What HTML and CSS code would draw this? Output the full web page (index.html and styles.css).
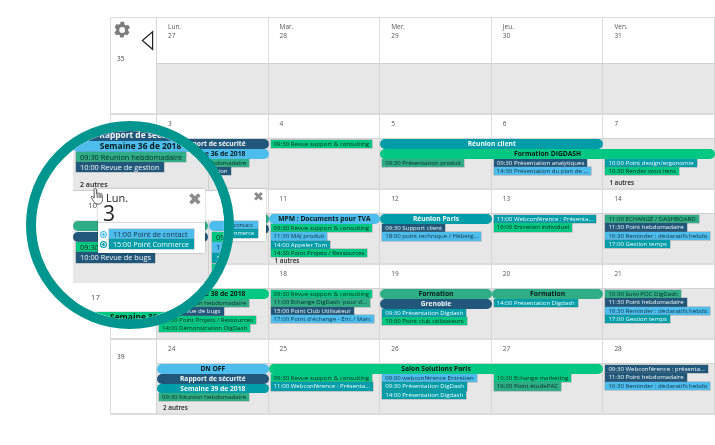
FILE: index.html
```html
<!DOCTYPE html>
<html lang="fr">
<head>
<meta charset="utf-8">
<title>Calendrier</title>
<link rel="stylesheet" href="styles.css">
</head>
<body>
<main class="calendar">
  <section class="week first">
    <div class="wk">
      <div class="wk-tools">
        <svg class="gear" viewBox="0 0 24 24"><path d="M19.4 13a7.5 7.5 0 0 0 0-2l2.2-1.7-2.2-3.7-2.6 1a7.5 7.5 0 0 0-1.700-1L14.500 2h-4.300l-.4 2.700a7.500 7.500 0 0 0-1.700 1l-2.600-1-2.200 3.700L5 11a7.500 7.500 0 0 0 0 2l-2.200 1.700 2.200 3.700 2.600-1a7.500 7.500 0 0 0 1.700 1l.4 2.600h4.300l.4-2.600a7.500 7.500 0 0 0 1.700-1l2.600 1 2.200-3.700zM12.200 15.500a3.500 3.500 0 1 1 0-7 3.500 3.500 0 0 1 0 7z"/></svg>
        <svg class="collapse" viewBox="0 0 14 22"><path d="M12.500 1.500 1.500 11l11 9.500z"/></svg>
      </div>
      <span class="wk-num">35</span>
    </div>
    <div class="head"><span>Lun.</span><span>27</span></div>
    <div class="head"><span>Mar.</span><span>28</span></div>
    <div class="head"><span>Mer.</span><span>29</span></div>
    <div class="head"><span>Jeu.</span><span>30</span></div>
    <div class="head"><span>Ven.</span><span>31</span></div>
    <div class="body">
      <div class="cell c1"></div><div class="cell c2"></div><div class="cell c3"></div><div class="cell c4"></div><div class="cell c5"></div>
    </div>
  </section>

  <section class="week">
    <div class="wk"></div>
    <div class="head"><span>3</span></div>
    <div class="head"><span>4</span></div>
    <div class="head"><span>5</span></div>
    <div class="head"><span>6</span></div>
    <div class="head"><span>7</span></div>
    <div class="body">
      <div class="cell c1 p2">
        <div class="ev sage">09:30 Réunion hebdomadaire</div>
        <div class="ev navy">10:00 Revue de gestion</div>
      </div>
      <div class="cell c2 p0"><div class="ev green">09:30 Revue support &amp; consulting</div></div>
      <div class="cell c3 p2"><div class="ev sage">09:30 Présentation produit</div></div>
      <div class="cell c4 p2">
        <div class="ev navy">09:30 Présentation analytiques</div>
        <div class="ev sky">14:30 Présentation du plan de ...</div>
      </div>
      <div class="cell c5 p2">
        <div class="ev teal">10:00 Point design/ergonomie</div>
        <div class="ev green">10:30 Rendez vous liens</div>
        <div class="more">1 autres</div>
      </div>
      <div class="bar navy c1 r1">Rapport de sécurité</div>
      <div class="bar sky c1 r2">Semaine 36 de 2018</div>
      <div class="bar teal c3 s2 r1">Réunion client</div>
      <div class="bar green c3 s3 r2">Formation DIGDASH</div>
    </div>
  </section>

  <section class="week">
    <div class="wk"></div>
    <div class="head"><span></span></div>
    <div class="head"><span>11</span></div>
    <div class="head"><span>12</span></div>
    <div class="head"><span>13</span></div>
    <div class="head"><span>14</span></div>
    <div class="body">
      <div class="cell c1 p2"></div>
      <div class="cell c2 p1">
        <div class="ev green">09:30 Revue support &amp; consulting</div>
        <div class="ev sky">11:30 MAJ produit</div>
        <div class="ev teal">14:00 Appeler Tom</div>
        <div class="ev green">14:30 Point Projets / Ressources</div>
        <div class="more">1 autres</div>
      </div>
      <div class="cell c3 p1">
        <div class="ev navy">09:30 Support client</div>
        <div class="ev sky">18:00 point technique / Héberg...</div>
      </div>
      <div class="cell c4 p0">
        <div class="ev teal">11:00 Webconférence : Présenta...</div>
        <div class="ev green">16:00 Entretien individuel</div>
      </div>
      <div class="cell c5 p0">
        <div class="ev sage">11:00 ECHANGE / DASHBOARD</div>
        <div class="ev navy">11:30 Point hebdomadaire</div>
        <div class="ev sky">16:30 Reminder : déclaratifs hebdo</div>
        <div class="ev teal">17:00 Gestion temps</div>
      </div>
      <div class="bar sage c1 r1"></div>
      <div class="bar navy c1 r2"></div>
      <div class="bar sky c2 r1">MPM : Documents pour TVA</div>
      <div class="bar teal c3 r1">Réunion Paris</div>
    </div>
  </section>

  <section class="week">
    <div class="wk"></div>
    <div class="head"><span></span></div>
    <div class="head"><span>18</span></div>
    <div class="head"><span>19</span></div>
    <div class="head"><span>20</span></div>
    <div class="head"><span>21</span></div>
    <div class="body">
      <div class="cell c1 p1">
        <div class="ev sage">09:30 Réunion hebdomadaire</div>
        <div class="ev navy">10:00 Revue de bugs</div>
        <div class="ev green">11:30 Point Projets / Ressources</div>
        <div class="ev green">14:00 Démonstration DigDash</div>
      </div>
      <div class="cell c2 p0">
        <div class="ev green">09:30 Revue support &amp; consulting</div>
        <div class="ev sage">11:00 Echange DigDash&nbsp; pour d...</div>
        <div class="ev navy">15:00 Point Club Utilisateur</div>
        <div class="ev sky">17:00 Point d'échange - Eric / Marc</div>
      </div>
      <div class="cell c3 p2">
        <div class="ev teal">09:30 Présentation Digdash</div>
        <div class="ev green">10:00 Point club utilisateurs</div>
      </div>
      <div class="cell c4 p1"><div class="ev teal">14:00 Présentation Digdash</div></div>
      <div class="cell c5 p0">
        <div class="ev sage">10:30 Suivi POC DigDash</div>
        <div class="ev navy">11:30 Point hebdomadaire</div>
        <div class="ev sky">16:30 Reminder : déclaratifs hebdo</div>
        <div class="ev teal">17:00 Gestion temps</div>
      </div>
      <div class="bar green c1 r1">Semaine 38 de 2018</div>
      <div class="bar sage c3 r1">Formation</div>
      <div class="bar navy c3 r2">Grenoble</div>
      <div class="bar sage c4 r1">Formation</div>
    </div>
  </section>

  <section class="week">
    <div class="wk"><span class="wk-num">39</span></div>
    <div class="head"><span>24</span></div>
    <div class="head"><span>25</span></div>
    <div class="head"><span>26</span></div>
    <div class="head"><span>27</span></div>
    <div class="head"><span>28</span></div>
    <div class="body">
      <div class="cell c1 p3">
        <div class="ev sage">09:30 Réunion hebdomadaire</div>
        <div class="more">2 autres</div>
      </div>
      <div class="cell c2 p1">
        <div class="ev green">09:30 Revue support &amp; consulting</div>
        <div class="ev teal">11:00 Webconférence : Présenta...</div>
      </div>
      <div class="cell c3 p1">
        <div class="ev sky">09:00 webconférence Entretien</div>
        <div class="ev teal">09:30 Présentation DigDash</div>
        <div class="ev teal">14:00 Présentation Digdash</div>
      </div>
      <div class="cell c4 p1">
        <div class="ev green">10:30 Echange marketing</div>
        <div class="ev sage">16:30 Point étudePAC</div>
      </div>
      <div class="cell c5 p0">
        <div class="ev navy">09:30 Webconférence : présenta...</div>
        <div class="ev navy">11:30 Point hebdomadaire</div>
        <div class="ev sky">16:30 Reminder : déclaratifs hebdo</div>
      </div>
      <div class="bar sky c1 r1">DN OFF</div>
      <div class="bar navy c1 r2">Rapport de sécurité</div>
      <div class="bar teal c1 r3">Semaine 39 de 2018</div>
      <div class="bar green c2 s3 r1">Salon Solutions Paris</div>
    </div>
  </section>

  <aside class="popup back">
    <button class="close">✖</button>
    <div class="ev sky">11:00 Point de contact</div>
    <div class="ev teal">15:00 Point Commerce</div>
  </aside>

  <div class="lens">
    <div class="lens-grid">
      <div class="l-grey la">
        <div class="l-bar navy top">Rapport de sécurité</div>
        <div class="l-bar sky">Semaine 36 de 2018</div>
        <div class="l-ev sage">09:30 Réunion hebdomadaire</div>
        <div class="l-ev navy">10:00 Revue de gestion</div>
        <div class="l-more">2 autres</div>
      </div>
      <div class="l-grey lb"></div>
      <div class="l-white lc"><span>10</span></div>
      <div class="l-grey ld">
        <div class="l-bar sage">Réunion</div>
        <div class="l-bar navy"></div>
        <div class="l-ev green">09:30</div>
        <div class="l-ev navy">10:00 Revue de bugs</div>
      </div>
      <div class="l-grey le">
        <div class="l-bar sky edge"></div>
        <div class="l-ev green edge-ev">09</div>
        <div class="l-ev sky edge-ev">11</div>
        <div class="l-ev teal edge-ev">14</div>
        <div class="l-ev green edge-ev">14</div>
      </div>
      <div class="l-white lf"><span>17</span></div>
      <div class="l-grey lg"><div class="l-bar green">Semaine 38 de 2018</div></div>
    </div>
    <div class="popup front">
      <button class="close big">✖</button>
      <div class="pop-head"><span class="pop-day">Lun.</span><span class="pop-num">3</span></div>
      <div class="pop-list">
        <div class="pop-row"><i class="dot sky-dot"></i><div class="l-ev sky">11:00 Point de contact</div></div>
        <div class="pop-row"><i class="dot teal-dot"></i><div class="l-ev teal">15:00 Point Commerce</div></div>
      </div>
    </div>
    <svg class="hand" viewBox="0 0 14 19"><path d="M4.500 1.500c.8-.6 1.700 0 1.800 1l.3 4.300.6-.6c.7-.4 1.300-.3 1.700.3.600-.5 1.400-.3 1.700.4.700-.4 1.500 0 1.600.9l.3 4.700c0 2.500-1.200 4.500-3.800 4.600-2.500.1-4-.9-5-2.800L1.300 10.600c-.4-.9.500-1.700 1.400-1.100L4.300 11 4 2.500c0-.4.200-.8.500-1z"/><path d="M7 6.500 7.300 11M9 7l.2 4M10.700 7.500l.2 3.500"/></svg>
  </div>
</main>
</body>
</html>
```
FILE: styles.css
```css
* { box-sizing: border-box; }
html, body { margin: 0; background: #fff; }
body { width: 715px; height: 445px; overflow: hidden; font-family: "Open Sans", "Noto Sans", sans-serif; color: #333; }

.calendar { position: relative; width: 605px; margin: 17px 0 0 110px; border-top: 1px solid #dcdcdc; border-left: 1px solid #dcdcdc; filter: blur(.3px); }

.week { display: grid; grid-template-columns: 46px repeat(5, 1fr); grid-template-rows: 23px 52px; }
.week.first { grid-template-rows: 45px 52px; }

.wk { grid-row: 1 / 3; border-right: 1px solid #d4d4d4; border-bottom: 2px solid #dcdcdc; background: #fff; font-size: 6.500px; padding: 12px 0 0 6px; }
.first .wk { padding: 1px 0 0 1px; }
.wk-tools { display: flex; height: 34px; }
.gear { width: 20px; height: 20px; margin-top: 1px; fill: #7d7d7d; }
.collapse { width: 13px; height: 21px; margin: 11px 0 0 9px; fill: #fff; stroke: #222; stroke-width: 1.300; }
.first .wk-num { margin-left: 5px; display: block; margin-top: 1px; }
.wk-num { color: #444; }

.head { display: flex; flex-direction: column; padding: 5px 0 0 11px; font-size: 6.500px; line-height: 8.500px; color: #555; background: #fff; border-right: 1px solid #dcdcdc; }

.body { grid-column: 2 / 7; display: grid; grid-template-columns: repeat(5, 1fr); grid-template-rows: 10px 9.500px 9.500px 1fr; border-top: 1px solid #d2d2d2; height: 52px; }
.week .body { border-bottom: 2px solid #dcdcdc; }

.cell { grid-row: 1 / -1; min-width: 0; background: #e7e7e7; border-right: 1px solid #d4d4d4; display: flex; flex-direction: column; align-items: flex-start; padding-left: 2px; padding-bottom: 1px; }
.c1 { grid-column-start: 1; }
.c2 { grid-column-start: 2; }
.c3 { grid-column-start: 3; }
.c4 { grid-column-start: 4; }
.c5 { grid-column-start: 5; }
.s2 { grid-column-end: span 2; }
.s3 { grid-column-end: span 3; }
.p0 { padding-top: 1px; }
.p1 { padding-top: 10px; }
.p2 { padding-top: 19.500px; }
.p3 { padding-top: 29px; }
.r1 { grid-row: 1; }
.r2 { grid-row: 2; }
.r3 { grid-row: 3; }

.navy { background: #20577a; color: #f2f6f8; }
.sky { background: #4dbdee; color: #12303f; }
.teal { background: #009da8; color: #f2fbfb; }
.green { background: #00c781; color: #06291d; }
.sage { background: #2fae85; color: #06291d; }

.ev { height: 8.300px; line-height: 8.300px; padding: 0 3px; font-size: 6.100px; white-space: nowrap; box-shadow: 0 0 0 .5px rgba(120,130,130,.65); }
.bar { height: 9.500px; line-height: 9.500px; border-radius: 5px; text-align: center; font-size: 6.700px; font-weight: 700; white-space: nowrap; }
.bar.green, .bar.sky, .bar.sage { color: #071a18; }
.more { margin-top: auto; padding-left: 4px; font-size: 6.300px; line-height: 8px; font-weight: 600; color: #222; }

.popup { position: absolute; background: #fff; box-shadow: 0 0 2px rgba(0,0,0,.3); }
.popup.back { left: 79px; top: 171px; width: 76px; height: 52px; padding: 32px 8px 0 0; display: flex; flex-direction: column; align-items: flex-end; }
.popup.back .ev { width: 66px; font-size: 5.700px; padding: 0 0 0 2px; }
.close { position: absolute; padding: 0; border: 0; background: none; color: #8c8c8c; font-family: "DejaVu Sans", sans-serif; font-size: 13px; line-height: 13px; font-weight: 700; }
.popup.back .close { right: 2px; top: 1px; }

.lens { position: absolute; left: -85px; top: 103px; width: 208px; height: 208px; border-radius: 50%; border: 10px solid #009690; overflow: hidden; background: #fff; }
.lens-grid { display: grid; grid-template-columns: 37px 136px 1fr; grid-template-rows: 59px 30px 63px 28px 1fr; height: 100%; }
.l-grey { background: #e7e7e7; border-right: 1px solid #d0d0d0; display: flex; flex-direction: column; align-items: flex-start; }
.l-white { background: #fff; font-size: 8px; color: #555; padding: 8px 0 0 15px; }
.la { grid-column: 2; grid-row: 1; }
.lb { grid-column: 3; grid-row: 1; }
.lc { grid-column: 2 / 4; grid-row: 2; border-top: 1px solid #ccc; }
.ld { grid-column: 2; grid-row: 3; }
.le { grid-column: 3; grid-row: 3; }
.lf { grid-column: 2 / 4; grid-row: 4; padding-left: 18px; }
.lg { grid-column: 2 / 4; grid-row: 5; }
.l-bar { align-self: stretch; height: 10.500px; line-height: 10.500px; border-radius: 6px; margin-top: .5px; text-align: center; font-size: 8.400px; font-weight: 700; white-space: nowrap; }
.l-bar.sky, .l-bar.green, .l-bar.sage { color: #071a18; }
.l-bar.top { margin-top: -1px; }
.l-ev { height: 10.300px; line-height: 10.300px; margin-left: 3px; padding: 0 4px; font-size: 7.400px; white-space: nowrap; box-shadow: 0 0 0 .5px rgba(120,130,130,.6); }
.l-more { margin: auto 0 0 7px; font-size: 7px; line-height: 11px; font-weight: 600; color: #222; }
.edge { margin-right: -10px; }
.edge-ev { margin-top: .5px; }

.popup.front { left: 62px; top: 58px; width: 107px; height: 64px; }
.pop-head { display: flex; flex-direction: column; height: 34px; padding: 3px 0 0 5px; border-bottom: 1px solid #d8d8d8; color: #222; }
.pop-day { margin-left: 3px; font-size: 11px; line-height: 12px; }
.pop-num { font-size: 21px; line-height: 19px; }
.close.big { right: 3px; top: 1px; font-size: 17px; line-height: 18px; }
.pop-list { padding-top: 6px; }
.pop-row { display: flex; align-items: center; height: 10px; }
.pop-row .l-ev { width: 85px; margin-left: 3px; padding-left: 4px; font-size: 7.200px; }
.dot { width: 5px; height: 5px; margin-left: 3px; border-radius: 50%; border: 1px solid #fff; }
.sky-dot { background: #4dbdee; box-shadow: 0 0 0 1px #4dbdee; }
.teal-dot { background: #009da8; box-shadow: 0 0 0 1px #009da8; }

.hand { position: absolute; left: 54px; top: 56px; width: 14px; height: 19px; fill: #fff; stroke: #333; stroke-width: .8; }
.hand path + path { fill: none; }
```
